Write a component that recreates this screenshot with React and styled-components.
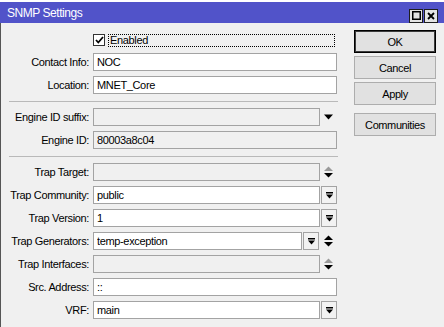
import styled, { createGlobalStyle } from "styled-components";

const GlobalStyle = createGlobalStyle`
  html, body {
    margin: 0;
    padding: 0;
    background: #ffffff;
  }
  body {
    font-family: "Liberation Sans", Arial, sans-serif;
    font-size: 11px;
    color: #000;
  }
  * {
    box-sizing: border-box;
  }
`;

const Screen = styled.div`
  width: 444px;
  height: 327px;
  padding-top: 2px;
  overflow: hidden;
`;

const Window = styled.div`
  display: flex;
  flex-direction: column;
  height: 325px;
`;

const TitleBar = styled.div`
  height: 21px;
  flex: none;
  display: flex;
  align-items: center;
  justify-content: space-between;
  padding: 0 6px 0 7px;
  background: #5153c9;
  color: #ffffff;
  font-size: 12px;
  letter-spacing: -0.45px;
`;

const TitleButtons = styled.div`
  display: flex;
  gap: 1px;
  margin-top: 6px;
`;

const TitleButton = styled.div`
  width: 14px;
  height: 14px;
  display: flex;
  align-items: center;
  justify-content: center;
  background: #e4e4e4;
  border: 1px solid #1e1e1e;
`;

const Body = styled.div`
  flex: 1;
  display: flex;
  align-items: flex-start;
  background: #f0f0f0;
  border-left: 1px solid #555555;
  padding-top: 7px;
`;

const Form = styled.div`
  width: 336px;
  display: flex;
  flex-direction: column;
  gap: 5px;
  padding-top: 2px;
`;

const Row = styled.div`
  display: flex;
  align-items: center;
  height: ${(p) => (p.$tall ? 16 : 18)}px;
`;

const Label = styled.div`
  width: 88px;
  margin-right: 4px;
  text-align: right;
  white-space: nowrap;
  letter-spacing: -0.35px;
`;

const Field = styled.div`
  width: 244px;
  display: flex;
  align-items: center;
`;

const Input = styled.input`
  width: ${(p) => (p.$w ? `${p.$w}px` : "100%")};
  flex: none;
  height: 18px;
  margin: 0;
  padding: 0 3px;
  border: 1px solid #a3a3a3;
  border-radius: 0;
  background: ${(p) => (p.disabled ? "#f0f0f0" : "#ffffff")};
  font-family: inherit;
  font-size: 11px;
  letter-spacing: -0.35px;
  color: #000;
  outline: none;
`;

const DropButton = styled.div`
  width: 16px;
  height: 18px;
  flex: none;
  margin-left: 1px;
  display: flex;
  align-items: center;
  justify-content: center;
  background: #f2f2f2;
  border: 1px solid #a3a3a3;
`;

const ArrowSlot = styled.div`
  width: ${(p) => p.$w || 17}px;
  height: 18px;
  flex: none;
  display: flex;
  align-items: center;
  justify-content: center;
`;

const Separator = styled.div`
  margin: 2px 0 1px 8px;
  width: 329px;
  height: 1px;
  background: #b9b9b9;
`;

const CheckRow = styled.label`
  display: flex;
  align-items: center;
  gap: 3px;
`;

const CheckBox = styled.div`
  width: 12px;
  height: 12px;
  display: flex;
  align-items: center;
  justify-content: center;
  background: #ffffff;
  border: 1px solid #333333;
`;

const FocusText = styled.div`
  width: 227px;
  height: 13px;
  line-height: 11px;
  padding-left: 1px;
  border: 1px dotted #000;
  letter-spacing: -0.35px;
`;

const Buttons = styled.div`
  display: flex;
  flex-direction: column;
  gap: 3px;
  margin-left: 17px;
`;

const Button = styled.button`
  width: 82px;
  height: 23px;
  margin: ${(p) => (p.$spaced ? "5px 0 0" : "0")};
  padding: 0;
  background: #e1e1e1;
  border: 1px solid ${(p) => (p.$default ? "#000000" : "#adadad")};
  box-shadow: ${(p) => (p.$default ? "inset 0 0 0 1px #3c3c3c" : "none")};
  border-radius: 0;
  font-family: inherit;
  font-size: 11px;
  letter-spacing: -0.4px;
  color: #000;
`;

const DropIcon = () => (
  <svg width="7" height="7" viewBox="0 0 7 7">
    <rect x="0" y="0" width="7" height="1.5" fill="#000" />
    <polygon points="0,2.5 7,2.5 3.5,6.5" fill="#000" />
  </svg>
);

const UpDown = ({ active }) => (
  <svg width="9" height="12" viewBox="0 0 9 12">
    <polygon points="0,5 9,5 4.5,0.5" fill={active ? "#000" : "#9a9a9a"} />
    <polygon points="0,7 9,7 4.5,11.5" fill="#000" />
  </svg>
);

const DownOnly = () => (
  <svg width="9" height="6" viewBox="0 0 9 6">
    <polygon points="0,0.5 9,0.5 4.5,5.5" fill="#000" />
  </svg>
);

function TextRow({ label, value, disabled, drop, arrows }) {
  return (
    <Row>
      <Label>{label}</Label>
      <Field>
        <Input
          readOnly
          disabled={disabled}
          value={value}
          $w={drop || arrows ? 227 : undefined}
        />
        {drop && (
          <DropButton>
            <DropIcon />
          </DropButton>
        )}
        {arrows === "down" && (
          <ArrowSlot>
            <DownOnly />
          </ArrowSlot>
        )}
        {arrows === "updown" && (
          <ArrowSlot>
            <UpDown />
          </ArrowSlot>
        )}
      </Field>
    </Row>
  );
}

export default function App() {
  return (
    <Screen>
      <GlobalStyle />
      <Window>
        <TitleBar>
          <span>SNMP Settings</span>
          <TitleButtons>
            <TitleButton>
              <svg width="9" height="9" viewBox="0 0 9 9">
                <rect x="0.75" y="0.75" width="7.5" height="7.5" fill="none" stroke="#000" strokeWidth="1.5" />
              </svg>
            </TitleButton>
            <TitleButton>
              <svg width="8" height="8" viewBox="0 0 8 8">
                <path d="M1 1 L7 7 M7 1 L1 7" stroke="#000" strokeWidth="1.8" />
              </svg>
            </TitleButton>
          </TitleButtons>
        </TitleBar>
        <Body>
          <Form>
            <Row $tall>
              <Label />
              <CheckRow>
                <CheckBox>
                  <svg width="9" height="8" viewBox="0 0 9 8">
                    <path d="M1 4 L3.3 6.5 L8 1" fill="none" stroke="#000" strokeWidth="1.8" />
                  </svg>
                </CheckBox>
                <FocusText>Enabled</FocusText>
              </CheckRow>
            </Row>
            <TextRow label="Contact Info:" value="NOC" />
            <TextRow label="Location:" value="MNET_Core" />
            <Separator />
            <TextRow label="Engine ID suffix:" value="" disabled arrows="down" />
            <TextRow label="Engine ID:" value="80003a8c04" disabled />
            <Separator />
            <TextRow label="Trap Target:" value="" disabled arrows="updown" />
            <TextRow label="Trap Community:" value="public" drop />
            <TextRow label="Trap Version:" value="1" drop />
            <Row>
              <Label>Trap Generators:</Label>
              <Field>
                <Input readOnly value="temp-exception" $w={209} />
                <DropButton>
                  <DropIcon />
                </DropButton>
                <ArrowSlot $w={18}>
                  <UpDown active />
                </ArrowSlot>
              </Field>
            </Row>
            <TextRow label="Trap Interfaces:" value="" disabled arrows="updown" />
            <TextRow label="Src. Address:" value="::" />
            <TextRow label="VRF:" value="main" drop />
          </Form>
          <Buttons>
            <Button $default>OK</Button>
            <Button>Cancel</Button>
            <Button>Apply</Button>
            <Button $spaced>Communities</Button>
          </Buttons>
        </Body>
      </Window>
    </Screen>
  );
}
